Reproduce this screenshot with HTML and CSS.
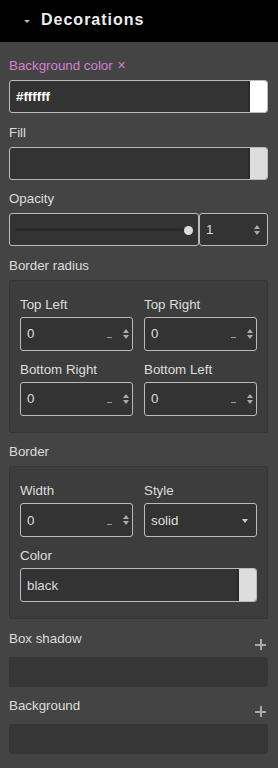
FILE: index.html
```html
<!DOCTYPE html>
<html lang="en">
<head>
    <meta charset="UTF-8">
    <meta name="viewport" content="width=device-width, initial-scale=1.0">
    <title>Decorations</title>
    <link rel="stylesheet" href="styles.css">
</head>
<body>
    <div class="header">
        <span class="caret"></span>
        <span class="title">Decorations</span>
    </div>

    <div class="panel">
        <div class="field">
            <div class="label label-active">Background color <span class="clear">&times;</span></div>
            <div class="input">
                <span class="value value-strong">#ffffff</span>
                <span class="swatch swatch-white"></span>
            </div>
        </div>

        <div class="field">
            <div class="label">Fill</div>
            <div class="input">
                <span class="value"></span>
                <span class="swatch"></span>
            </div>
        </div>

        <div class="field">
            <div class="label">Opacity</div>
            <div class="slider-row">
                <div class="input slider">
                    <span class="track"></span>
                    <span class="thumb"></span>
                </div>
                <div class="input number">
                    <span class="value">1</span>
                    <span class="spinner"><i class="up"></i><i class="down"></i></span>
                </div>
            </div>
        </div>

        <div class="field">
            <div class="label label-group">Border radius</div>
            <div class="group">
                <div class="grid">
                    <div>
                        <div class="label label-small">Top Left</div>
                        <div class="input input-small">
                            <span class="value">0</span>
                            <span class="unit"></span>
                            <span class="spinner"><i class="up"></i><i class="down"></i></span>
                        </div>
                    </div>
                    <div>
                        <div class="label label-small">Top Right</div>
                        <div class="input input-small">
                            <span class="value">0</span>
                            <span class="unit"></span>
                            <span class="spinner"><i class="up"></i><i class="down"></i></span>
                        </div>
                    </div>
                    <div>
                        <div class="label label-small">Bottom Right</div>
                        <div class="input input-small">
                            <span class="value">0</span>
                            <span class="unit"></span>
                            <span class="spinner"><i class="up"></i><i class="down"></i></span>
                        </div>
                    </div>
                    <div>
                        <div class="label label-small">Bottom Left</div>
                        <div class="input input-small">
                            <span class="value">0</span>
                            <span class="unit"></span>
                            <span class="spinner"><i class="up"></i><i class="down"></i></span>
                        </div>
                    </div>
                </div>
            </div>
        </div>

        <div class="field">
            <div class="label label-group">Border</div>
            <div class="group">
                <div class="grid">
                    <div>
                        <div class="label label-small">Width</div>
                        <div class="input input-small">
                            <span class="value">0</span>
                            <span class="unit"></span>
                            <span class="spinner"><i class="up"></i><i class="down"></i></span>
                        </div>
                    </div>
                    <div>
                        <div class="label label-small">Style</div>
                        <div class="input input-small">
                            <span class="value">solid</span>
                            <span class="arrow"></span>
                        </div>
                    </div>
                    <div class="wide">
                        <div class="label label-small">Color</div>
                        <div class="input input-small">
                            <span class="value">black</span>
                            <span class="swatch"></span>
                        </div>
                    </div>
                </div>
            </div>
        </div>

        <div class="field">
            <div class="list-head">
                <div class="label">Box shadow</div>
                <span class="add"></span>
            </div>
            <div class="list"></div>
        </div>

        <div class="field">
            <div class="list-head">
                <div class="label">Background</div>
                <span class="add"></span>
            </div>
            <div class="list"></div>
        </div>
    </div>
</body>
</html>
```

FILE: styles.css
```css
body {
    margin: 0;
    padding: 0;
    width: 278px;
    height: 768px;
    background-color: #444;
    font-family: "Liberation Sans", Arial, sans-serif;
    font-size: 13.33px;
    color: #ddd;
    overflow: hidden;
}

.header {
    height: 42px;
    background-color: #000;
    display: flex;
    align-items: center;
    padding-left: 24px;
    box-sizing: border-box;
}

.caret {
    width: 0;
    height: 0;
    border-left: 3px solid transparent;
    border-right: 3px solid transparent;
    border-top: 3px solid #bbb;
    margin-right: 11px;
    margin-top: 1px;
}

.title {
    font-size: 16px;
    font-weight: bold;
    letter-spacing: 1px;
    color: #eee;
    margin-top: -2px;
}

.panel {
    padding: 15px 10px 0 9px;
}

.field {
    margin-bottom: 11.5px;
}

.label {
    line-height: 16px;
    margin-bottom: 6px;
    color: #ddd;
}

.label-active {
    color: #d480d0;
}

.clear {
    font-size: 14px;
    margin-left: 1px;
}

.label-group {
    margin-bottom: 6px;
}

.label-small {
    margin-bottom: 4px;
}

.input {
    height: 33px;
    box-sizing: border-box;
    border: 1px solid #bbb;
    border-radius: 3px;
    background-color: #333;
    display: flex;
    align-items: stretch;
    overflow: hidden;
}

.input-small {
    height: 34px;
}

.value {
    flex: 1;
    display: flex;
    align-items: center;
    padding-left: 6px;
    color: #ddd;
}

.value-strong {
    font-weight: bold;
    color: #fff;
}

.swatch {
    width: 17px;
    border-left: 2px solid #2a2a2a;
    background-color: #ddd;
}

.swatch-white {
    background-color: #fff;
}

.slider-row {
    display: flex;
}

.slider {
    flex: 1;
    align-items: center;
    padding: 0 5px;
}

.track {
    flex: 1;
    height: 3px;
    background-color: #292929;
    border-radius: 2px;
}

.thumb {
    width: 9px;
    height: 9px;
    border-radius: 50%;
    background-color: #ddd;
    margin-left: -1px;
    margin-top: 1px;
}

.number {
    width: 69px;
    padding-right: 4px;
}

.spinner {
    display: flex;
    flex-direction: column;
    justify-content: center;
    gap: 2px;
    padding-right: 3px;
}

.spinner i {
    display: block;
    width: 0;
    height: 0;
    border-left: 3.5px solid transparent;
    border-right: 3.5px solid transparent;
}

.spinner .up {
    border-bottom: 4px solid #aaa;
}

.spinner .down {
    border-top: 4px solid #aaa;
}

.unit {
    width: 5px;
    height: 1px;
    background-color: #999;
    align-self: center;
    margin-top: 8px;
    margin-right: 11px;
}

.arrow {
    width: 0;
    height: 0;
    align-self: center;
    border-left: 3.5px solid transparent;
    border-right: 3.5px solid transparent;
    border-top: 4px solid #ccc;
    margin-right: 8px;
    margin-top: 1px;
}

.group {
    background-color: #3d3d3d;
    border: 1px solid #363636;
    border-radius: 2px;
    padding: 16px 10px 16px 10px;
}

.grid {
    display: grid;
    grid-template-columns: 1fr 1fr;
    column-gap: 11px;
    row-gap: 11px;
}

.wide {
    grid-column: 1 / 3;
}

.list-head {
    display: flex;
    justify-content: space-between;
    align-items: flex-start;
    height: 22px;
    margin-bottom: 4px;
}

.list-head .label {
    margin-bottom: 0;
}

.add {
    position: relative;
    width: 11px;
    height: 11px;
    margin-top: 8px;
    margin-right: 2px;
}

.add::before,
.add::after {
    content: "";
    position: absolute;
    background-color: #aaa;
}

.add::before {
    left: 0;
    top: 5px;
    width: 11px;
    height: 2px;
}

.add::after {
    left: 5px;
    top: 0;
    width: 2px;
    height: 11px;
}

.list {
    height: 30px;
    background-color: #363636;
    border-radius: 3px;
}
```
